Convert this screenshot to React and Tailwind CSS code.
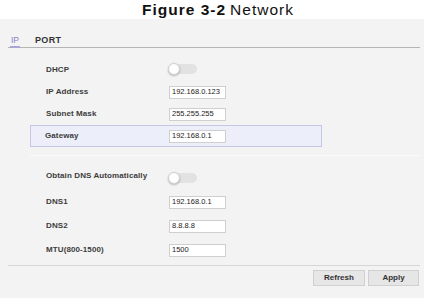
import React from 'react';

const FONT = { fontFamily: '"Liberation Sans", Arial, sans-serif' };

function Toggle() {
  return (
    <div className="relative w-[28px] h-[10px] rounded-full bg-[#e2e2e2]">
      <div className="absolute left-[-1px] top-[-1px] w-[12px] h-[12px] rounded-full bg-white border border-[#d0d0d0] shadow-[0_1px_2px_rgba(0,0,0,0.25)]" />
    </div>
  );
}

function Field({ value }) {
  return (
    <div className="w-[57px] h-[13px] bg-white border border-[#cfcfcf] flex items-center px-[2px] text-[7.5px] text-[#222] leading-none">
      {value}
    </div>
  );
}

function Row({ label, children, h = 'h-[22px]' }) {
  return (
    <div className={`flex items-center ${h} pl-[46px]`}>
      <div className="w-[123px] text-[8px] font-bold text-[#3c3c3c] leading-none tracking-[0.1px]">{label}</div>
      {children}
    </div>
  );
}

export default function App() {
  return (
    <div className="w-[424px] h-[298px] bg-white overflow-hidden" style={FONT}>
      {/* Title */}
      <div className="h-[19px] flex items-center justify-center text-[15.5px] tracking-[1px] text-[#111] leading-none pl-[12px]">
        <span className="font-bold">Figure 3-2</span>
        <span className="ml-[4px]">Network</span>
      </div>

      {/* Panel */}
      <div className="h-[279px] bg-[#f3f3f3] flex flex-col">
        {/* Tabs */}
        <div className="mt-[14px] ml-[8px] mr-[4px] h-[15px] border-b border-[#b5b5b5] flex items-end gap-[15px] pl-[2px]">
          <div className="pb-[2px] -mb-px border-b-2 border-[#a9a6d4] text-[8.5px] text-[#8682c4] leading-none px-px">IP</div>
          <div className="pb-[2px] text-[9px] font-bold text-[#333] leading-none tracking-[0.3px]">PORT</div>
        </div>

        {/* Form */}
        <div className="mt-[11px] flex flex-col">
          <Row label="DHCP">
            <div className="-mt-[3px]">
              <Toggle />
            </div>
          </Row>
          <Row label="IP Address">
            <Field value="192.168.0.123" />
          </Row>
          <Row label="Subnet Mask">
            <Field value="255.255.255" />
          </Row>
          <div className="ml-[30px] w-[292px] h-[22px] bg-[#eceef9] border border-[#c6c8e2] flex items-center pl-[14px]">
            <div className="w-[124px] text-[8px] font-bold text-[#3c3c3c] leading-none tracking-[0.1px]">Gateway</div>
            <Field value="192.168.0.1" />
          </div>
          <div className="mt-[8px] ml-[30px] mr-[4px] h-px bg-[#fafafa]" />
          <div className="mt-[9px]">
            <Row label="Obtain DNS Automatically">
              <div className="mt-[4px]">
                <Toggle />
              </div>
            </Row>
          </div>
          <div className="mt-[3px]">
            <Row label="DNS1" h="h-[24px]">
              <Field value="192.168.0.1" />
            </Row>
            <Row label="DNS2" h="h-[24px]">
              <Field value="8.8.8.8" />
            </Row>
            <Row label="MTU(800-1500)" h="h-[24px]">
              <Field value="1500" />
            </Row>
          </div>
        </div>

        {/* Footer */}
        <div className="mt-[3px] ml-[8px] mr-[4px] h-px bg-[#d6d6d6]" />
        <div className="mt-[4px] flex justify-end gap-[3px] pr-[5px]">
          <button className="w-[52px] h-[16px] bg-[#e6e6e6] border border-[#d0d0d0] text-[8px] font-bold text-[#333] leading-none">Refresh</button>
          <button className="w-[51px] h-[16px] bg-[#e6e6e6] border border-[#d0d0d0] text-[8px] font-bold text-[#333] leading-none">Apply</button>
        </div>
      </div>
    </div>
  );
}
